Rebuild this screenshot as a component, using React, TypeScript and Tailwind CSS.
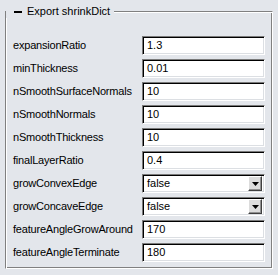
import React from "react";

interface Field {
  label: string;
  value: string;
  kind?: "text" | "combo";
}

const fields: Field[] = [
  { label: "expansionRatio", value: "1.3" },
  { label: "minThickness", value: "0.01" },
  { label: "nSmoothSurfaceNormals", value: "10" },
  { label: "nSmoothNormals", value: "10" },
  { label: "nSmoothThickness", value: "10" },
  { label: "finalLayerRatio", value: "0.4" },
  { label: "growConvexEdge", value: "false", kind: "combo" },
  { label: "growConcaveEdge", value: "false", kind: "combo" },
  { label: "featureAngleGrowAround", value: "170" },
  { label: "featureAngleTerminate", value: "180" },
];

function SunkenBox({ children }: { children: React.ReactNode }) {
  return (
    <div className="w-[123px] h-[19px] flex items-center bg-white border border-t-[#7a7a7a] border-l-[#7a7a7a] border-r-white border-b-white shadow-[inset_1px_1px_0_#000,inset_-1px_-1px_0_#dcdfe3]">
      {children}
    </div>
  );
}

function ComboBox({ value }: { value: string }) {
  return (
    <SunkenBox>
      <span className="flex-1 pl-[4px] leading-[15px]">{value}</span>
      <span className="w-[14px] h-[15px] mr-[2px] flex items-center justify-center bg-[#dcdcdc] border border-t-white border-l-white border-r-[#404040] border-b-[#404040] shadow-[inset_-1px_-1px_0_#909090]">
        <svg width="7" height="4" viewBox="0 0 7 4">
          <path d="M0 0h7L3.5 4z" fill="#000" />
        </svg>
      </span>
    </SunkenBox>
  );
}

export default function App() {
  return (
    <div
      className="w-[278px] h-[275px] bg-[#e3e6eb] pt-[5px] text-[11px] text-black"
      style={{ fontFamily: '"Liberation Sans", Arial, sans-serif' }}
    >
      <fieldset className="mx-[5px] px-[7px] pt-[18px] pb-[6px] border border-t-[#808080] border-l-[#808080] border-r-white border-b-white shadow-[inset_1px_1px_0_#fff,inset_-1px_-1px_0_#808080]">
        <legend className="-ml-[7px] pl-[8px] pr-[4px] h-[13px] leading-[13px] flex items-center bg-[#e3e6eb]">
          <span className="w-[8px] h-[2px] bg-black mr-[5px]" />
          <span>Export shrinkDict</span>
        </legend>

        <div className="flex flex-col gap-[4px]">
          {fields.map((f) => (
            <div key={f.label} className="flex items-center justify-between h-[19px]">
              <span className="leading-[13px] tracking-[-0.2px]">{f.label}</span>
              {f.kind === "combo" ? (
                <ComboBox value={f.value} />
              ) : (
                <SunkenBox>
                  <span className="pl-[4px] leading-[15px]">{f.value}</span>
                </SunkenBox>
              )}
            </div>
          ))}
        </div>
      </fieldset>
    </div>
  );
}
